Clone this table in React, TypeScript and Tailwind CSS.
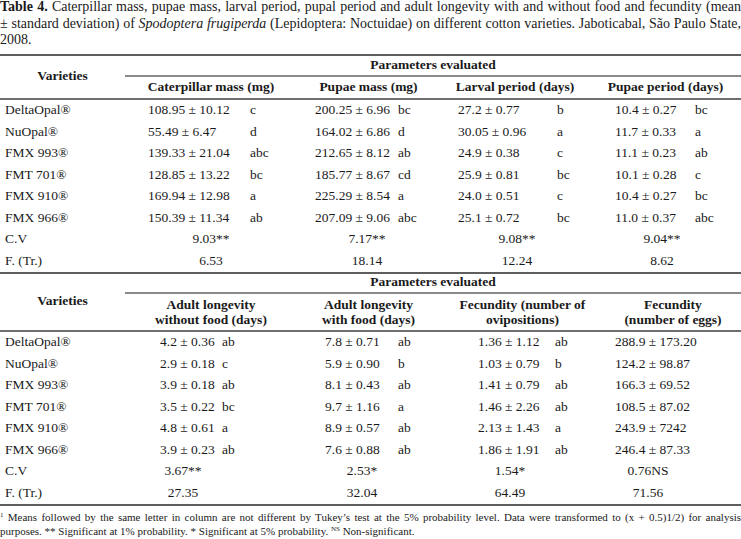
type Col = { pad: string; val: string; cv: string };
type Cell = [string, string?];

const t1Cols: Col[] = [
  { pad: "pl-[23px]", val: "w-[102px]", cv: "w-[172px]" },
  { pad: "pl-[18px]", val: "w-[83px]", cv: "w-[140px]" },
  { pad: "pl-[18px]", val: "w-[99px]", cv: "w-[154px]" },
  { pad: "pl-[25px]", val: "w-[80px]", cv: "w-[144px]" },
];

const t2Cols: Col[] = [
  { pad: "pl-[35px]", val: "w-[62px]", cv: "w-[116px]" },
  { pad: "pl-[28px]", val: "w-[73px]", cv: "w-[130px]" },
  { pad: "pl-[38px]", val: "w-[77px]", cv: "w-[140px]" },
  { pad: "pl-[10px]", val: "w-[110px]", cv: "w-[86px]" },
];

const t1Rows: [string, Cell[]][] = [
  ["DeltaOpal®", [["108.95 ± 10.12", "c"], ["200.25 ± 6.96", "bc"], ["27.2 ± 0.77", "b"], ["10.4 ± 0.27", "bc"]]],
  ["NuOpal®", [["55.49 ± 6.47", "d"], ["164.02 ± 6.86", "d"], ["30.05 ± 0.96", "a"], ["11.7 ± 0.33", "a"]]],
  ["FMX 993®", [["139.33 ± 21.04", "abc"], ["212.65 ± 8.12", "ab"], ["24.9 ± 0.38", "c"], ["11.1 ± 0.23", "ab"]]],
  ["FMT 701®", [["128.85 ± 13.22", "bc"], ["185.77 ± 8.67", "cd"], ["25.9 ± 0.81", "bc"], ["10.1 ± 0.28", "c"]]],
  ["FMX 910®", [["169.94 ± 12.98", "a"], ["225.29 ± 8.54", "a"], ["24.0 ± 0.51", "c"], ["10.4 ± 0.27", "bc"]]],
  ["FMX 966®", [["150.39 ± 11.34", "ab"], ["207.09 ± 9.06", "abc"], ["25.1 ± 0.72", "bc"], ["11.0 ± 0.37", "abc"]]],
];

const t2Rows: [string, Cell[]][] = [
  ["DeltaOpal®", [["4.2 ± 0.36", "ab"], ["7.8 ± 0.71", "ab"], ["1.36 ± 1.12", "ab"], ["288.9 ± 173.20"]]],
  ["NuOpal®", [["2.9 ± 0.18", "c"], ["5.9 ± 0.90", "b"], ["1.03 ± 0.79", "b"], ["124.2 ± 98.87"]]],
  ["FMX 993®", [["3.9 ± 0.18", "ab"], ["8.1 ± 0.43", "ab"], ["1.41 ± 0.79", "ab"], ["166.3 ± 69.52"]]],
  ["FMT 701®", [["3.5 ± 0.22", "bc"], ["9.7 ± 1.16", "a"], ["1.46 ± 2.26", "ab"], ["108.5 ± 87.02"]]],
  ["FMX 910®", [["4.8 ± 0.61", "a"], ["8.9 ± 0.57", "ab"], ["2.13 ± 1.43", "a"], ["243.9 ± 7242"]]],
  ["FMX 966®", [["3.9 ± 0.23", "ab"], ["7.6 ± 0.88", "ab"], ["1.86 ± 1.91", "ab"], ["246.4 ± 87.33"]]],
];

function DataRow({ label, cells, cols }: { label: string; cells: Cell[]; cols: Col[] }) {
  return (
    <>
      <div className="flex h-[21.5px] items-center pl-[5px]">{label}</div>
      {cells.map(([v, l], i) => (
        <div key={i} className={`flex h-[21.5px] items-center whitespace-nowrap ${cols[i].pad}`}>
          <span className={`shrink-0 ${cols[i].val}`}>{v}</span>
          {l && <span>{l}</span>}
        </div>
      ))}
    </>
  );
}

function StatRow({ label, vals, cols }: { label: string; vals: string[]; cols: Col[] }) {
  return (
    <>
      <div className="flex h-[21.5px] items-center pl-[5px]">{label}</div>
      {vals.map((v, i) => (
        <div key={i} className="flex h-[21.5px] items-center">
          <span className={`shrink-0 text-center ${cols[i].cv}`}>{v}</span>
        </div>
      ))}
    </>
  );
}

function Table1() {
  return (
    <div className="grid grid-cols-[125px_172px_143px_150px_151px] border-y-2 border-[#5e5e5e]">
      <div className="row-span-2 flex items-center justify-center font-bold">Varieties</div>
      <div className="col-span-4 flex h-[21px] items-center justify-center border-b-2 border-[#8a8a8a] font-bold">
        Parameters evaluated
      </div>
      {["Caterpillar mass (mg)", "Pupae mass (mg)", "Larval period (days)", "Pupae period (days)"].map((h) => (
        <div key={h} className="flex h-[21px] items-center justify-center font-bold">{h}</div>
      ))}
      <div className="col-span-5 border-t-2 border-[#6e6e6e]" />
      {t1Rows.map(([label, cells]) => (
        <DataRow key={label} label={label} cells={cells} cols={t1Cols} />
      ))}
      <StatRow label="C.V" vals={["9.03**", "7.17**", "9.08**", "9.04**"]} cols={t1Cols} />
      <StatRow label="F. (Tr.)" vals={["6.53", "18.14", "12.24", "8.62"]} cols={t1Cols} />
    </div>
  );
}

function Table2() {
  const heads = [
    ["Adult longevity", "without food (days)"],
    ["Adult longevity", "with food (days)"],
    ["Fecundity (number of", "ovipositions)"],
    ["Fecundity", "(number of eggs)"],
  ];
  return (
    <div className="grid grid-cols-[125px_172px_143px_165px_136px] border-b-2 border-[#5e5e5e]">
      <div className="row-span-2 flex items-center justify-center font-bold">Varieties</div>
      <div className="col-span-4 flex h-[20px] items-center justify-center border-b-2 border-[#8a8a8a] font-bold">
        Parameters evaluated
      </div>
      {heads.map(([a, b], i) => (
        <div key={i} className="flex h-[36px] flex-col items-center justify-center font-bold leading-[15px]">
          <span>{a}</span>
          <span>{b}</span>
        </div>
      ))}
      <div className="col-span-5 border-t-2 border-[#6e6e6e]" />
      {t2Rows.map(([label, cells]) => (
        <DataRow key={label} label={label} cells={cells} cols={t2Cols} />
      ))}
      <StatRow label="C.V" vals={["3.67**", "2.53*", "1.54*", "0.76NS"]} cols={t2Cols} />
      <StatRow label="F. (Tr.)" vals={["27.35", "32.04", "64.49", "71.56"]} cols={t2Cols} />
    </div>
  );
}

export default function App() {
  return (
    <div className="h-[539px] w-[741px] overflow-hidden bg-white [font-family:'Liberation_Serif','Times_New_Roman',serif] text-[13.5px] text-[#1a1a1a]">
      <div className="mt-[-1px] text-[14px] leading-[16.5px]">
        <p className="text-justify [text-align-last:justify]">
          <b>Table 4.</b> Caterpillar mass, pupae mass, larval period, pupal period and adult longevity with and
          without food and fecundity (mean
        </p>
        <p className="text-justify [text-align-last:justify]">
          ± standard deviation) of <i>Spodoptera frugiperda</i> (Lepidoptera: Noctuidae) on different cotton
          varieties. Jaboticabal, São Paulo State,
        </p>
        <p>2008.</p>
      </div>
      <div className="mt-[5px]">
        <Table1 />
        <Table2 />
      </div>
      <p className="mt-[4px] text-justify text-[11px] leading-[14px]">
        <sup className="text-[7px]">1</sup> Means followed by the same letter in column are not different by
        Tukey’s test at the 5% probability level. Data were transformed to (x + 0.5)1/2) for analysis purposes. **
        Significant at 1% probability. * Significant at 5% probability. <sup className="text-[7px]">NS</sup>{" "}
        Non-significant.
      </p>
    </div>
  );
}
